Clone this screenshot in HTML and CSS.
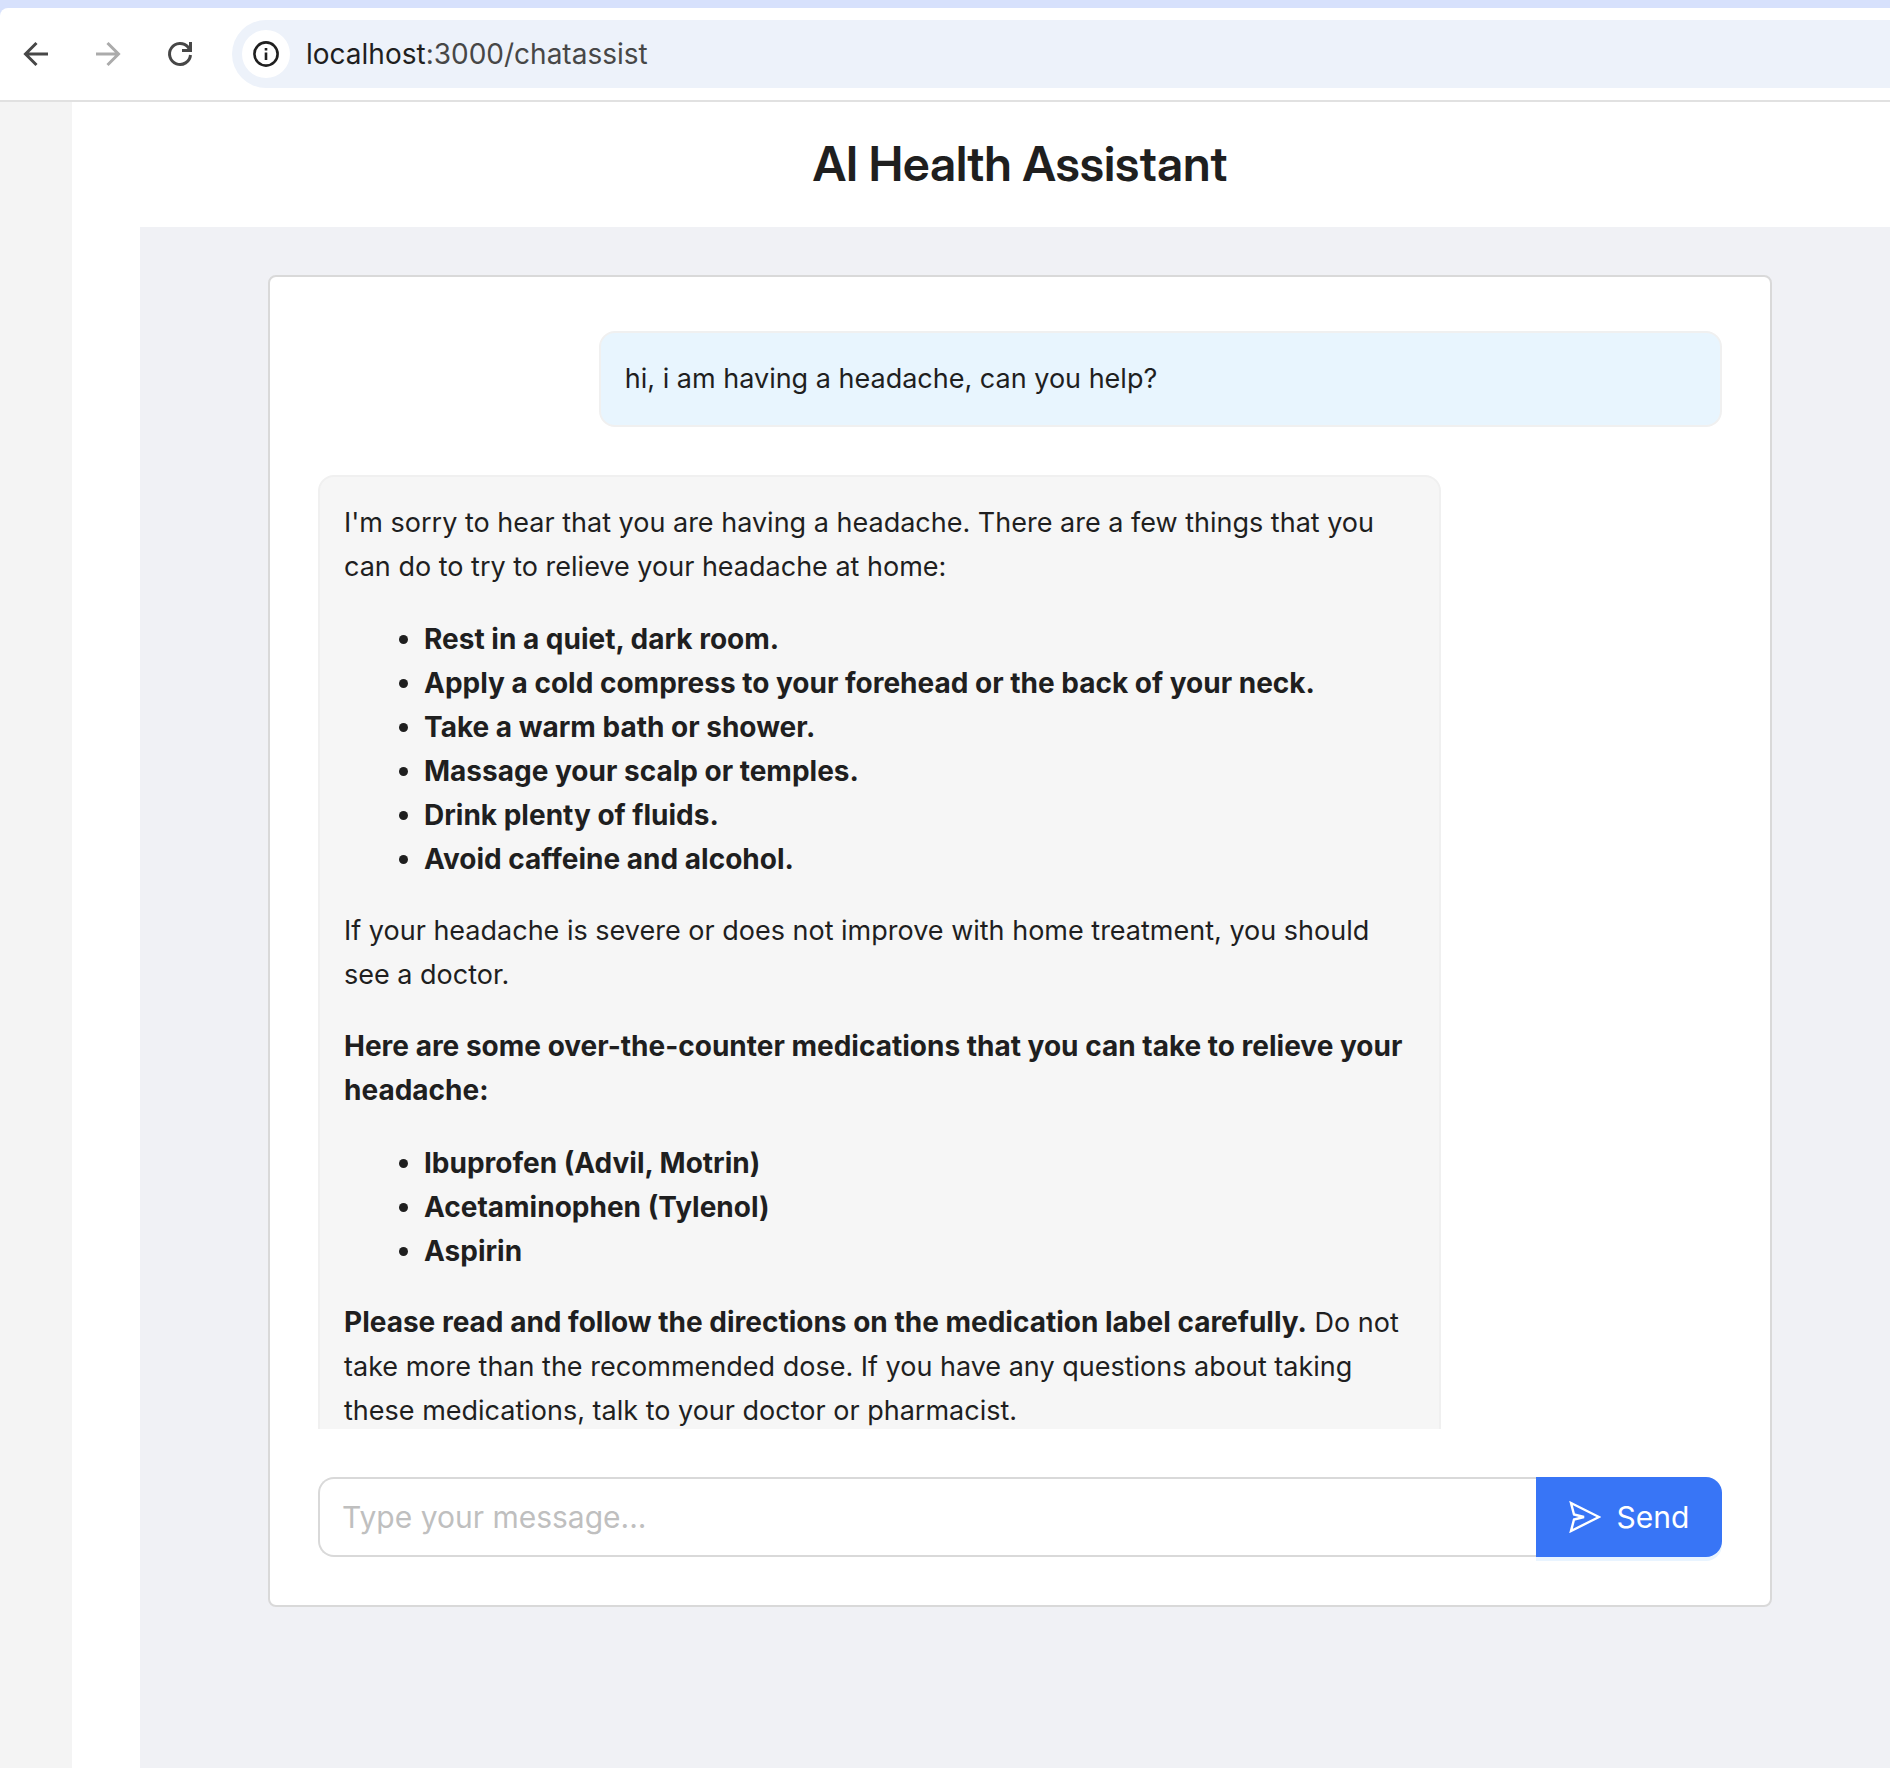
FILE: index.html
```html
<!DOCTYPE html>
<html lang="en">
<head>
<meta charset="utf-8">
<title>AI Health Assistant</title>
<link rel="stylesheet" href="styles.css">
</head>
<body>
<header class="browser">
  <div class="toolbar">
    <nav class="nav" aria-label="Browser">
      <button class="nav-button" type="button" aria-label="Back">
        <svg viewBox="0 0 32 32" width="32" height="32"><path d="M28 16H6M16.500 5L5.500 16l11 11" fill="none" stroke="currentColor" stroke-width="3"/></svg>
      </button>
      <button class="nav-button" type="button" aria-label="Forward" disabled>
        <svg viewBox="0 0 32 32" width="32" height="32"><path d="M4 16h22M15.500 5l11 11-11 11" fill="none" stroke="currentColor" stroke-width="3"/></svg>
      </button>
      <button class="nav-button" type="button" aria-label="Reload">
        <svg viewBox="0 0 32 32" width="32" height="32"><path d="M26.500 17A10.500 10.500 0 1 1 24 9.100L26 12" fill="none" stroke="currentColor" stroke-width="3"/><path d="M28 4v10H18v-3h7V4z" fill="currentColor"/></svg>
      </button>
    </nav>
    <div class="address">
      <button class="site-info" type="button" aria-label="Site information">
        <svg viewBox="0 0 28 28" width="28" height="28"><circle cx="14" cy="14" r="11.600" fill="none" stroke="currentColor" stroke-width="2.600"/><path d="M12.700 12.500h2.600V20h-2.600zM12.700 8h2.600v2.500h-2.600z" fill="currentColor"/></svg>
      </button>
      <span class="url"><span class="host">localhost</span>:3000/chatassist</span>
    </div>
  </div>
</header>
<div class="app">
  <aside class="rail"></aside>
  <main class="page">
    <h1 class="title">AI Health Assistant</h1>
    <section class="panel">
      <div class="card">
        <div class="messages">
          <div class="bubble bubble-user"><p>hi, i am having a headache, can you help?</p></div>
          <div class="bubble bubble-assistant">
            <p>I'm sorry to hear that you are having a headache. There are a few things that you can do to try to relieve your headache at home:</p>
            <ul>
              <li>Rest in a quiet, dark room.</li>
              <li>Apply a cold compress to your forehead or the back of your neck.</li>
              <li>Take a warm bath or shower.</li>
              <li>Massage your scalp or temples.</li>
              <li>Drink plenty of fluids.</li>
              <li>Avoid caffeine and alcohol.</li>
            </ul>
            <p>If your headache is severe or does not improve with home treatment, you should see a doctor.</p>
            <p><strong>Here are some over-the-counter medications that you can take to relieve your headache:</strong></p>
            <ul>
              <li>Ibuprofen (Advil, Motrin)</li>
              <li>Acetaminophen (Tylenol)</li>
              <li>Aspirin</li>
            </ul>
            <p><strong>Please read and follow the directions on the medication label carefully.</strong> Do not take more than the recommended dose. If you have any questions about taking these medications, talk to your doctor or pharmacist.</p>
          </div>
        </div>
        <form class="composer">
          <input class="message-input" type="text" placeholder="Type your message..." aria-label="Message">
          <button class="send" type="button">
            <svg viewBox="0 0 32 32" width="32" height="32"><path d="M2 2L30 16 2 30 5 18.500 15 16 5 13.500z" fill="none" stroke="currentColor" stroke-width="2.400"/></svg>
            <span>Send</span>
          </button>
        </form>
      </div>
    </section>
  </main>
</div>
</body>
</html>
```
FILE: styles.css
```css
* {
  box-sizing: border-box;
}

body {
  display: flex;
  flex-direction: column;
  min-height: 100vh;
  margin: 0;
  background: #fff;
  color: #1f1f1f;
  font-family: Inter, "Liberation Sans", sans-serif;
  font-size: 27px;
  line-height: 44px;
}

button,
input {
  font: inherit;
}

.browser {
  padding-top: 8px;
  background: #d7e1fc;
  border-bottom: 2px solid #e1e1e1;
}

.toolbar {
  display: flex;
  align-items: center;
  gap: 36px;
  padding: 12px 0 12px 20px;
  background: #fff;
  border-top-left-radius: 8px;
}

.nav {
  display: flex;
  gap: 40px;
}

.nav-button {
  display: flex;
  padding: 0;
  border: 0;
  background: none;
  color: #474747;
}

.nav-button:disabled {
  color: #ababab;
}

.address {
  display: flex;
  flex: 1;
  align-items: center;
  gap: 16px;
  height: 68px;
  padding-left: 10px;
  border-radius: 34px 0 0 34px;
  background: #edf2fa;
}

.site-info {
  display: flex;
  align-items: center;
  justify-content: center;
  width: 48px;
  height: 48px;
  padding: 0;
  border: 0;
  border-radius: 50%;
  background: #fff;
  color: #1f1f1f;
}

.url {
  color: #474747;
  font-size: 28px;
}

.host {
  color: #1f1f1f;
}

.app {
  display: flex;
  flex: 1;
}

.rail {
  width: 72px;
  background: #f4f4f4;
}

.page {
  display: flex;
  flex: 1;
  flex-direction: column;
  padding-left: 68px;
}

.title {
  margin: 0;
  padding: 32px 118px 33px 128px;
  font-family: "Inter Display", Inter, "Liberation Sans", sans-serif;
  font-size: 48px;
  font-weight: 600;
  line-height: 60px;
  text-align: center;
}

.panel {
  flex: 1;
  padding: 48px 118px 48px 128px;
  background: #f0f1f5;
}

.card {
  padding: 48px;
  border: 2px solid #d9d9d9;
  border-radius: 8px;
  background: #fff;
}

.messages {
  display: flex;
  flex-direction: column;
  gap: 48px;
  max-height: calc(100vh - 664px);
  padding-top: 6px;
  overflow-y: auto;
  scrollbar-width: none;
}

.bubble {
  flex-shrink: 0;
  width: 80%;
  padding: 24px;
  border: 2px solid #f0f0f0;
  border-radius: 16px;
}

.bubble-user {
  align-self: flex-end;
  background: #e8f5fe;
}

.bubble-assistant {
  background: #f6f6f6;
}

.bubble p,
.bubble ul {
  margin: 0 0 28px;
}

.bubble > :last-child {
  margin-bottom: 0;
}

.bubble ul {
  padding-left: 80px;
  font-size: 28px;
  font-weight: 700;
}

.bubble strong {
  font-size: 28px;
  font-weight: 700;
  line-height: 28px;
}

.composer {
  display: flex;
  margin: 48px 0 0;
}

.message-input {
  flex: 1;
  min-width: 0;
  height: 80px;
  padding: 0 22px;
  border: 2px solid #d9d9d9;
  border-right: 0;
  border-radius: 16px 0 0 16px;
  background: #fff;
  color: #1f1f1f;
  font-size: 30px;
}

.message-input::placeholder {
  color: #bfbfbf;
  opacity: 1;
}

.send {
  display: flex;
  align-items: center;
  justify-content: center;
  gap: 16px;
  width: 186px;
  height: 80px;
  padding: 0;
  border: 0;
  border-radius: 0 16px 16px 0;
  background: #3875f6;
  box-shadow: 0 4px 0 #e9f4ff;
  color: #fff;
  font-size: 30px;
}
```
